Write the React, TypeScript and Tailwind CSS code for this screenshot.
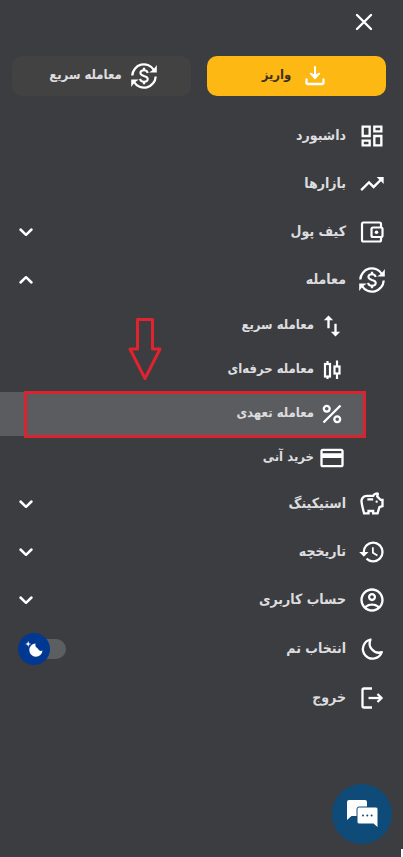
import { useState, type ReactNode } from "react";
import {
  MdHistory,
  MdOutlineAccountCircle,
  MdOutlineCreditCard,
  MdOutlineDashboard,
  MdOutlineSavings,
  MdPercent,
  MdSwapVert,
  MdTrendingUp,
} from "react-icons/md";

function Close() {
  return (
    <svg width="24" height="24" viewBox="0 0 24 24" fill="none" stroke="currentColor" strokeWidth="2.4" strokeLinecap="round">
      <path d="M5 5 19 19M19 5 5 19" />
    </svg>
  );
}

function Deposit() {
  return (
    <svg width="24" height="24" viewBox="0 0 24 24" fill="none" stroke="currentColor" strokeWidth="2" strokeLinecap="round" strokeLinejoin="round">
      <path d="M12 3V13" />
      <path d="M7.500 9.500 12 14.500 16.500 9.500L12 11.500Z" fill="currentColor" strokeWidth="1.4" />
      <path d="M3.500 15.500v3a1.500 1.500 0 0 0 1.500 1.500h14a1.500 1.500 0 0 0 1.500-1.500v-3" strokeWidth="2.300" />
    </svg>
  );
}

// Dollar sign inside two turning arrows
function Exchange() {
  return (
    <svg width="28" height="28" viewBox="0 0 28 28" fill="none" stroke="currentColor" strokeWidth="2.3">
      <path d="M2.300 13.500A11.700 11.700 0 0 1 24 8" />
      <path d="M25.700 14.500A11.700 11.700 0 0 1 4 20" />
      <path d="M26.800 3V10.600H19.200L22 8.500 24.600 6Z" fill="currentColor" stroke="none" />
      <path d="M1.200 25V17.400H8.800L6 19.500 3.400 22Z" fill="currentColor" stroke="none" />
      <path d="M17.700 11C17.400 9.200 16 8.300 14 8.300C11.800 8.300 10.400 9.400 10.400 11C10.400 12.800 12 13.400 14 14C16.300 14.600 17.800 15.300 17.800 17.100C17.800 18.800 16.300 19.800 14 19.800C11.800 19.800 10.300 18.800 10.100 16.900" strokeWidth="2" />
      <path d="M14 5.800V8.500M14 19.500V22.200" />
    </svg>
  );
}

function Wallet() {
  return (
    <svg width="26" height="26" viewBox="0 0 26 26" fill="none" stroke="currentColor" strokeWidth="2.2" strokeLinejoin="round">
      <path d="M22 8V5A1.500 1.500 0 0 0 20.500 3.500H4.500A1.500 1.500 0 0 0 3 5v16a1.500 1.500 0 0 0 1.500 1.500h16A1.500 1.500 0 0 0 22 21V18" />
      <rect x="12.500" y="8.500" width="11" height="9.500" rx="1.500" />
      <circle cx="17.500" cy="13.200" r="1.800" fill="currentColor" stroke="none" />
    </svg>
  );
}

function Candles() {
  return (
    <svg width="24" height="24" viewBox="0 0 24 24" fill="none" stroke="currentColor" strokeWidth="2.2">
      <path d="M7.500 3v3M7.500 18.500V21M17 2.500V8M17 15.500V21" />
      <rect x="5" y="6" width="5" height="12.500" />
      <rect x="14.500" y="8.500" width="5" height="7" />
    </svg>
  );
}

function Moon() {
  return (
    <svg width="26" height="26" viewBox="0 0 26 26" fill="none" stroke="currentColor" strokeWidth="2.3" strokeLinejoin="round">
      <path d="M11.500 3.500A9.700 9.700 0 1 0 22.800 16.200A9.300 9.300 0 0 1 11.500 3.500Z" />
    </svg>
  );
}

function Exit() {
  return (
    <svg width="26" height="26" viewBox="0 0 26 26" fill="none" stroke="currentColor" strokeWidth="2.3">
      <path d="M13 3.500H5a1.500 1.500 0 0 0-1.500 1.500v16A1.500 1.500 0 0 0 5 22.500h8" />
      <path d="M9.500 13H22" />
      <path d="M18.500 9 22.500 13 18.500 17" />
    </svg>
  );
}

function Chevron({ up }: { up?: boolean }) {
  return (
    <svg width="16" height="16" viewBox="0 0 16 16" fill="none" stroke="currentColor" strokeWidth="2.5" strokeLinecap="round" strokeLinejoin="round">
      <path d={up ? "M2.500 10.500 8 5.200 13.500 10.500" : "M2.500 5.500 8 10.800 13.500 5.500"} />
    </svg>
  );
}

function Chat() {
  return (
    <svg width="34" height="30" viewBox="0 0 34 30">
      <path d="M4 1h16a2 2 0 0 1 2 2v14H6.500L2 21V3a2 2 0 0 1 2-2Z" fill="#fff" />
      <path d="M14 8h17a2 2 0 0 1 2 2v19l-4.500-4H14a2 2 0 0 1-2-2V10a2 2 0 0 1 2-2Z" fill="#fff" stroke="#0f4b78" />
      <g fill="#0f4b78">
        <circle cx="18" cy="16.500" r="1" />
        <circle cx="22.300" cy="16.500" r="1" />
        <circle cx="26.600" cy="16.500" r="1" />
      </g>
    </svg>
  );
}

type Item = { label: string; icon: ReactNode; expands?: boolean };

const top: Item[] = [
  { label: "داشبورد", icon: <MdOutlineDashboard size={28} /> },
  { label: "بازارها", icon: <MdTrendingUp size={28} /> },
  { label: "کیف پول", icon: <Wallet />, expands: true },
];

const trades: Item[] = [
  { label: "معامله سریع", icon: <MdSwapVert size={28} /> },
  { label: "معامله حرفه‌ای", icon: <Candles /> },
  { label: "معامله تعهدی", icon: <MdPercent size={28} /> },
  { label: "خرید آنی", icon: <MdOutlineCreditCard size={28} /> },
];

const bottom: Item[] = [
  { label: "استیکینگ", icon: <MdOutlineSavings size={28} />, expands: true },
  { label: "تاریخچه", icon: <MdHistory size={28} />, expands: true },
  { label: "حساب کاربری", icon: <MdOutlineAccountCircle size={28} />, expands: true },
];

function Row({ item, open, onClick }: { item: Item; open?: boolean; onClick?: () => void }) {
  const inner = (
    <>
      <span className="flex w-7 shrink-0 justify-center text-white">{item.icon}</span>
      <span className="pb-0.5">{item.label}</span>
      {item.expands && (
        <span className="ms-auto text-white">
          <Chevron up={open} />
        </span>
      )}
    </>
  );
  const cls = "flex h-12 w-full items-center gap-3 ps-[17px] pe-[18px] text-sm";

  return (
    <li>
      {item.expands ? (
        <button type="button" className={cls} aria-expanded={!!open} onClick={onClick}>
          {inner}
        </button>
      ) : (
        <a href="#" className={cls}>
          {inner}
        </a>
      )}
    </li>
  );
}

export default function App() {
  const [open, setOpen] = useState(true);
  const [dark, setDark] = useState(true);

  return (
    <div
      dir="rtl"
      className="relative min-h-screen bg-[#3c3d41] font-['DejaVu_Sans_Condensed','DejaVu_Sans',sans-serif] font-bold text-[#dddddf]"
    >
      <div className="flex h-11 items-center ps-[27px]">
        <button type="button" aria-label="بستن" className="text-white">
          <Close />
        </button>
      </div>

      {/* Quick actions */}
      <div className="flex gap-4 pt-3 pb-4 ps-[17px] pe-3 text-[13px]">
        <button type="button" className="flex h-10 flex-1 items-center justify-center gap-3 rounded-[10px] bg-[#fdb813] ps-1 text-[#3c3022]">
          <span className="text-white">
            <Deposit />
          </span>
          <span className="pb-0.5">واریز</span>
        </button>
        <button type="button" className="flex h-10 flex-1 items-center justify-center gap-2 rounded-[10px] bg-[#424242] pe-1">
          <span className="text-white">
            <Exchange />
          </span>
          <span className="pb-0.5">معامله سریع</span>
        </button>
      </div>

      <nav>
        <ul>
          {top.map((item) => (
            <Row key={item.label} item={item} />
          ))}
          <Row
            item={{ label: "معامله", icon: <Exchange />, expands: true }}
            open={open}
            onClick={() => setOpen(!open)}
          />

          {open && (
            <li className="relative">
              <ul className="ms-10 text-[13px]">
                {trades.map((item, i) => (
                  <li key={item.label} className="relative">
                    <a href="#" className={i === 2 ? "flex h-11 items-center gap-1 bg-[#5b5c60] ps-[17px]" : "flex h-11 items-center gap-1 ps-[17px]"}>
                      <span className="flex w-7 justify-center text-white">{item.icon}</span>
                      <span className="pb-0.5">{item.label}</span>
                    </a>
                    {i === 2 && (
                      <div className="pointer-events-none absolute -top-px -bottom-0.5 -start-[3px] end-6 border-3 border-[#d9232e]" />
                    )}
                  </li>
                ))}
              </ul>
              <svg
                width="34"
                height="64"
                viewBox="0 0 34 64"
                fill="none"
                stroke="#e0232e"
                strokeWidth="3"
                strokeLinejoin="round"
                className="pointer-events-none absolute top-3.5 left-32"
              >
                <path d="M9.500 1.500H24.500V31H32L17 60.500 2 31H9.500Z" />
              </svg>
            </li>
          )}

          {bottom.map((item) => (
            <Row key={item.label} item={item} />
          ))}

          {/* Theme */}
          <li className="flex h-[50px] items-center gap-3 ps-[17px] pe-[18px] text-sm">
            <span className="flex w-7 justify-center text-white">
              <Moon />
            </span>
            <label htmlFor="theme" className="pb-0.5">
              انتخاب تم
            </label>
            <span dir="ltr" className="relative mr-auto flex h-8 w-12 items-center">
              <input
                id="theme"
                type="checkbox"
                role="switch"
                checked={dark}
                onChange={() => setDark(!dark)}
                className="ms-2 h-5 w-10 appearance-none rounded-full bg-[#5b5f61]"
              />
              <span
                className={
                  dark
                    ? "pointer-events-none absolute left-0 flex size-8 items-center justify-center rounded-full bg-[#003892]"
                    : "pointer-events-none absolute right-0 flex size-8 items-center justify-center rounded-full bg-[#003892]"
                }
              >
                <svg width="20" height="20" viewBox="0 0 20 20" fill="#fff">
                  <path d="M11.500 4.500A6.600 6.600 0 1 0 18.500 11.500A3.600 3.600 0 0 1 13.800 9.500A4.500 4.500 0 0 1 11.500 4.500Z" />
                  <path d="M4.200 2 5 4.200 7.200 5 5 5.800 4.200 8 3.400 5.800 1.200 5 3.400 4.200Z" />
                </svg>
              </span>
            </span>
          </li>
          <Row item={{ label: "خروج", icon: <Exit /> }} />
        </ul>
      </nav>

      <button
        type="button"
        aria-label="گفتگو"
        className="fixed right-[11px] bottom-[13px] flex size-15 items-center justify-center rounded-full bg-[#0f4b78]"
      >
        <Chat />
      </button>
      <div className="fixed right-0 bottom-0 h-2 w-0.5 bg-white" />
    </div>
  );
}
